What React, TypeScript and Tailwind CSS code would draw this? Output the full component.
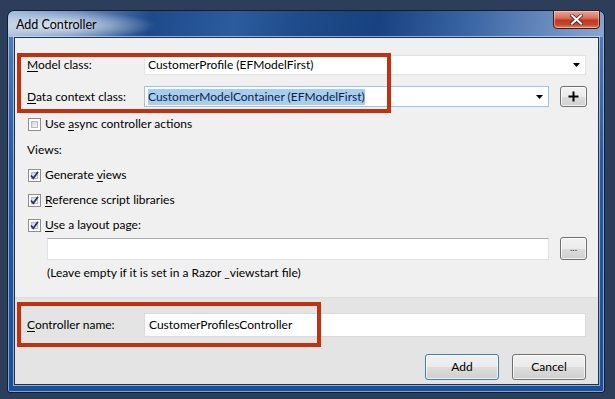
import React from "react";

const Arrow = () => (
  <svg width="7" height="4" viewBox="0 0 7 4" className="shrink-0">
    <polygon points="0,0 7,0 3.5,4" fill="#000" />
  </svg>
);

const Checkbox = ({ checked }: { checked?: boolean }) => (
  <span className="relative flex size-[13px] shrink-0 items-center justify-center border border-[#8e8f8f] bg-white">
    <span className="absolute inset-[2px] border border-[#b8bcc2] bg-[linear-gradient(135deg,#cfd3d8,#f7f7f7)]" />
    {checked && (
      <svg width="11" height="11" viewBox="0 0 11 11" className="relative">
        <path d="M2 5.5 L4.3 8.3 L9 1.8" fill="none" stroke="#262d7c" strokeWidth="1.7" />
      </svg>
    )}
  </span>
);

const WinButton = ({
  children,
  isDefault,
  className = "",
}: {
  children: React.ReactNode;
  isDefault?: boolean;
  className?: string;
}) => (
  <div
    className={`flex items-center justify-center rounded-[3px] border bg-[linear-gradient(to_bottom,#f2f2f2_0%,#ebebeb_50%,#dddddd_51%,#cfcfcf_100%)] shadow-[inset_0_0_0_1px_rgba(255,255,255,0.7)] ${
      isDefault ? "border-[#3c7fb1]" : "border-[#707070]"
    } ${className}`}
  >
    {children}
  </div>
);

const CheckRow = ({
  checked,
  className = "",
  children,
}: {
  checked?: boolean;
  className?: string;
  children: React.ReactNode;
}) => (
  <div className={`flex h-[16px] items-center gap-[4px] pl-[13px] ${className}`}>
    <Checkbox checked={checked} />
    <span>{children}</span>
  </div>
);

export default function App() {
  return (
    <div className="h-[399px] w-[615px] overflow-hidden bg-[#2d3e5b] pl-[7px] pt-[10px] font-['Lato','Noto_Sans',sans-serif] text-[12px] leading-[16px] text-black">
      <div className="relative flex h-[383px] w-[598px] flex-col rounded-t-[7px] rounded-b-[3px] border border-[#0f1d33] bg-[linear-gradient(to_bottom,#5b80b8,#2a5aa0_40%,#1d4f97)] shadow-[inset_0_0_0_1px_rgba(200,220,255,0.6)]">
        {/* title bar */}
        <div className="relative flex h-[26px] items-center rounded-t-[7px] bg-[linear-gradient(100deg,#a9bfdc_0%,#6d8dbd_12%,#1d4a8b_24%,#2c5c9e_38%,#1f4c8c_48%,#17427f_62%,#3d68a6_78%,#8aa6cf_100%)] pl-[8px] pt-[1px]">
          <div className="pointer-events-none absolute left-0 top-0 h-[26px] w-[150px] rounded-tl-[7px] bg-[radial-gradient(ellipse_at_35%_55%,rgba(255,255,255,0.75),rgba(255,255,255,0)_70%)]" />
          <span className="relative text-[12.5px] text-black">Add Controller</span>
          <div className="absolute right-[4px] top-[-1px] flex h-[19px] w-[47px] items-center justify-center rounded-b-[4px] border border-[#3b1b1b] bg-[linear-gradient(to_bottom,#e8a697_0%,#d67561_40%,#c2381c_55%,#c8452a_80%,#e08a6f_100%)] shadow-[inset_0_0_0_1px_rgba(255,220,210,0.5)]">
            <svg width="13" height="11" viewBox="0 0 13 11">
              <path d="M2 1.5 L11 9.5 M11 1.5 L2 9.5" stroke="#3a1a18" strokeWidth="3.6" strokeLinecap="square" />
              <path d="M2 1.5 L11 9.5 M11 1.5 L2 9.5" stroke="#ffffff" strokeWidth="2.2" strokeLinecap="square" />
            </svg>
          </div>
        </div>

        {/* frame + client */}
        <div className="flex flex-1 pb-[7px] pl-[6px] pr-[5px]">
          <div className="relative flex h-[348px] w-[585px] flex-col border border-[#1b3356] shadow-[0_0_0_1px_rgba(220,235,255,0.6)]">
            {/* top section */}
            <div className="flex h-[259px] flex-col bg-[#f0f0f0] pt-[17px]">
              <div className="flex h-[20px] items-center">
                <span className="w-[129px] pl-[12px]">
                  <u className="underline-offset-2">M</u>odel class:
                </span>
                <div className="flex h-[20px] w-[442px] items-center justify-between border border-[#e4e4e4] bg-white pl-[3px] pr-[5px]">
                  <span>CustomerProfile (EFModelFirst)</span>
                  <Arrow />
                </div>
              </div>

              <div className="mt-[11px] flex h-[21px] items-center">
                <span className="w-[129px] pl-[12px]">
                  <u className="underline-offset-2">D</u>ata context class:
                </span>
                <div className="flex h-[21px] w-[405px] items-center justify-between border border-[#9cc4ea] bg-white pl-[3px] pr-[5px]">
                  <span className="bg-[#a7cdf0] text-[#0d1f3f]">CustomerModelContainer (EFModelFirst)</span>
                  <Arrow />
                </div>
                <WinButton className="ml-[11px] h-[21px] w-[27px]">
                  <svg width="11" height="11" viewBox="0 0 11 11">
                    <path d="M5.5 0.5 V10.5 M0.5 5.5 H10.5" stroke="#000" strokeWidth="2" />
                  </svg>
                </WinButton>
              </div>

              <CheckRow className="mt-[9px]">
                Use <u className="underline-offset-2">a</u>sync controller actions
              </CheckRow>

              <div className="mt-[10px] h-[16px] pl-[12px]">Views:</div>

              <CheckRow checked className="mt-[9px]">
                Generate <u className="underline-offset-2">v</u>iews
              </CheckRow>
              <CheckRow checked className="mt-[9px]">
                <u className="underline-offset-2">R</u>eference script libraries
              </CheckRow>
              <CheckRow checked className="mt-[9px]">
                <u className="underline-offset-2">U</u>se a layout page:
              </CheckRow>

              <div className="mt-[4px] flex h-[23px] items-center pl-[32px]">
                <div className="h-[22px] w-[502px] border border-[#e2e3ea] border-t-[#abadb3] bg-white" />
                <WinButton className="ml-[11px] h-[23px] w-[27px]">
                  <span className="pb-[4px] text-[10px] leading-[10px] text-[#333]">...</span>
                </WinButton>
              </div>

              <div className="mt-[5px] h-[16px] pl-[32px]">
                (Leave empty if it is set in a Razor _viewstart file)
              </div>
            </div>

            {/* bottom section */}
            <div className="flex h-[87px] flex-col border-t border-[#dcdcdc] bg-[#e4e4e4] pt-[15px]">
              <div className="flex h-[24px] items-center">
                <span className="w-[129px] pl-[12px]">
                  <u className="underline-offset-2">C</u>ontroller name:
                </span>
                <div className="flex h-[24px] w-[442px] items-center border border-[#dadada] bg-white pl-[4px]">
                  CustomerProfilesController
                </div>
              </div>
              <div className="mt-[17px] flex justify-end gap-[13px] pr-[12px]">
                <WinButton isDefault className="h-[26px] w-[74px]">
                  Add
                </WinButton>
                <WinButton className="h-[26px] w-[74px]">Cancel</WinButton>
              </div>
            </div>

            {/* annotation boxes */}
            <div className="pointer-events-none absolute left-[2px] top-[15px] h-[60px] w-[374px] border-4 border-[#c0320f]" />
            <div className="pointer-events-none absolute left-[2px] top-[264px] h-[45px] w-[304px] border-4 border-[#c0320f]" />
          </div>
        </div>
      </div>
    </div>
  );
}
